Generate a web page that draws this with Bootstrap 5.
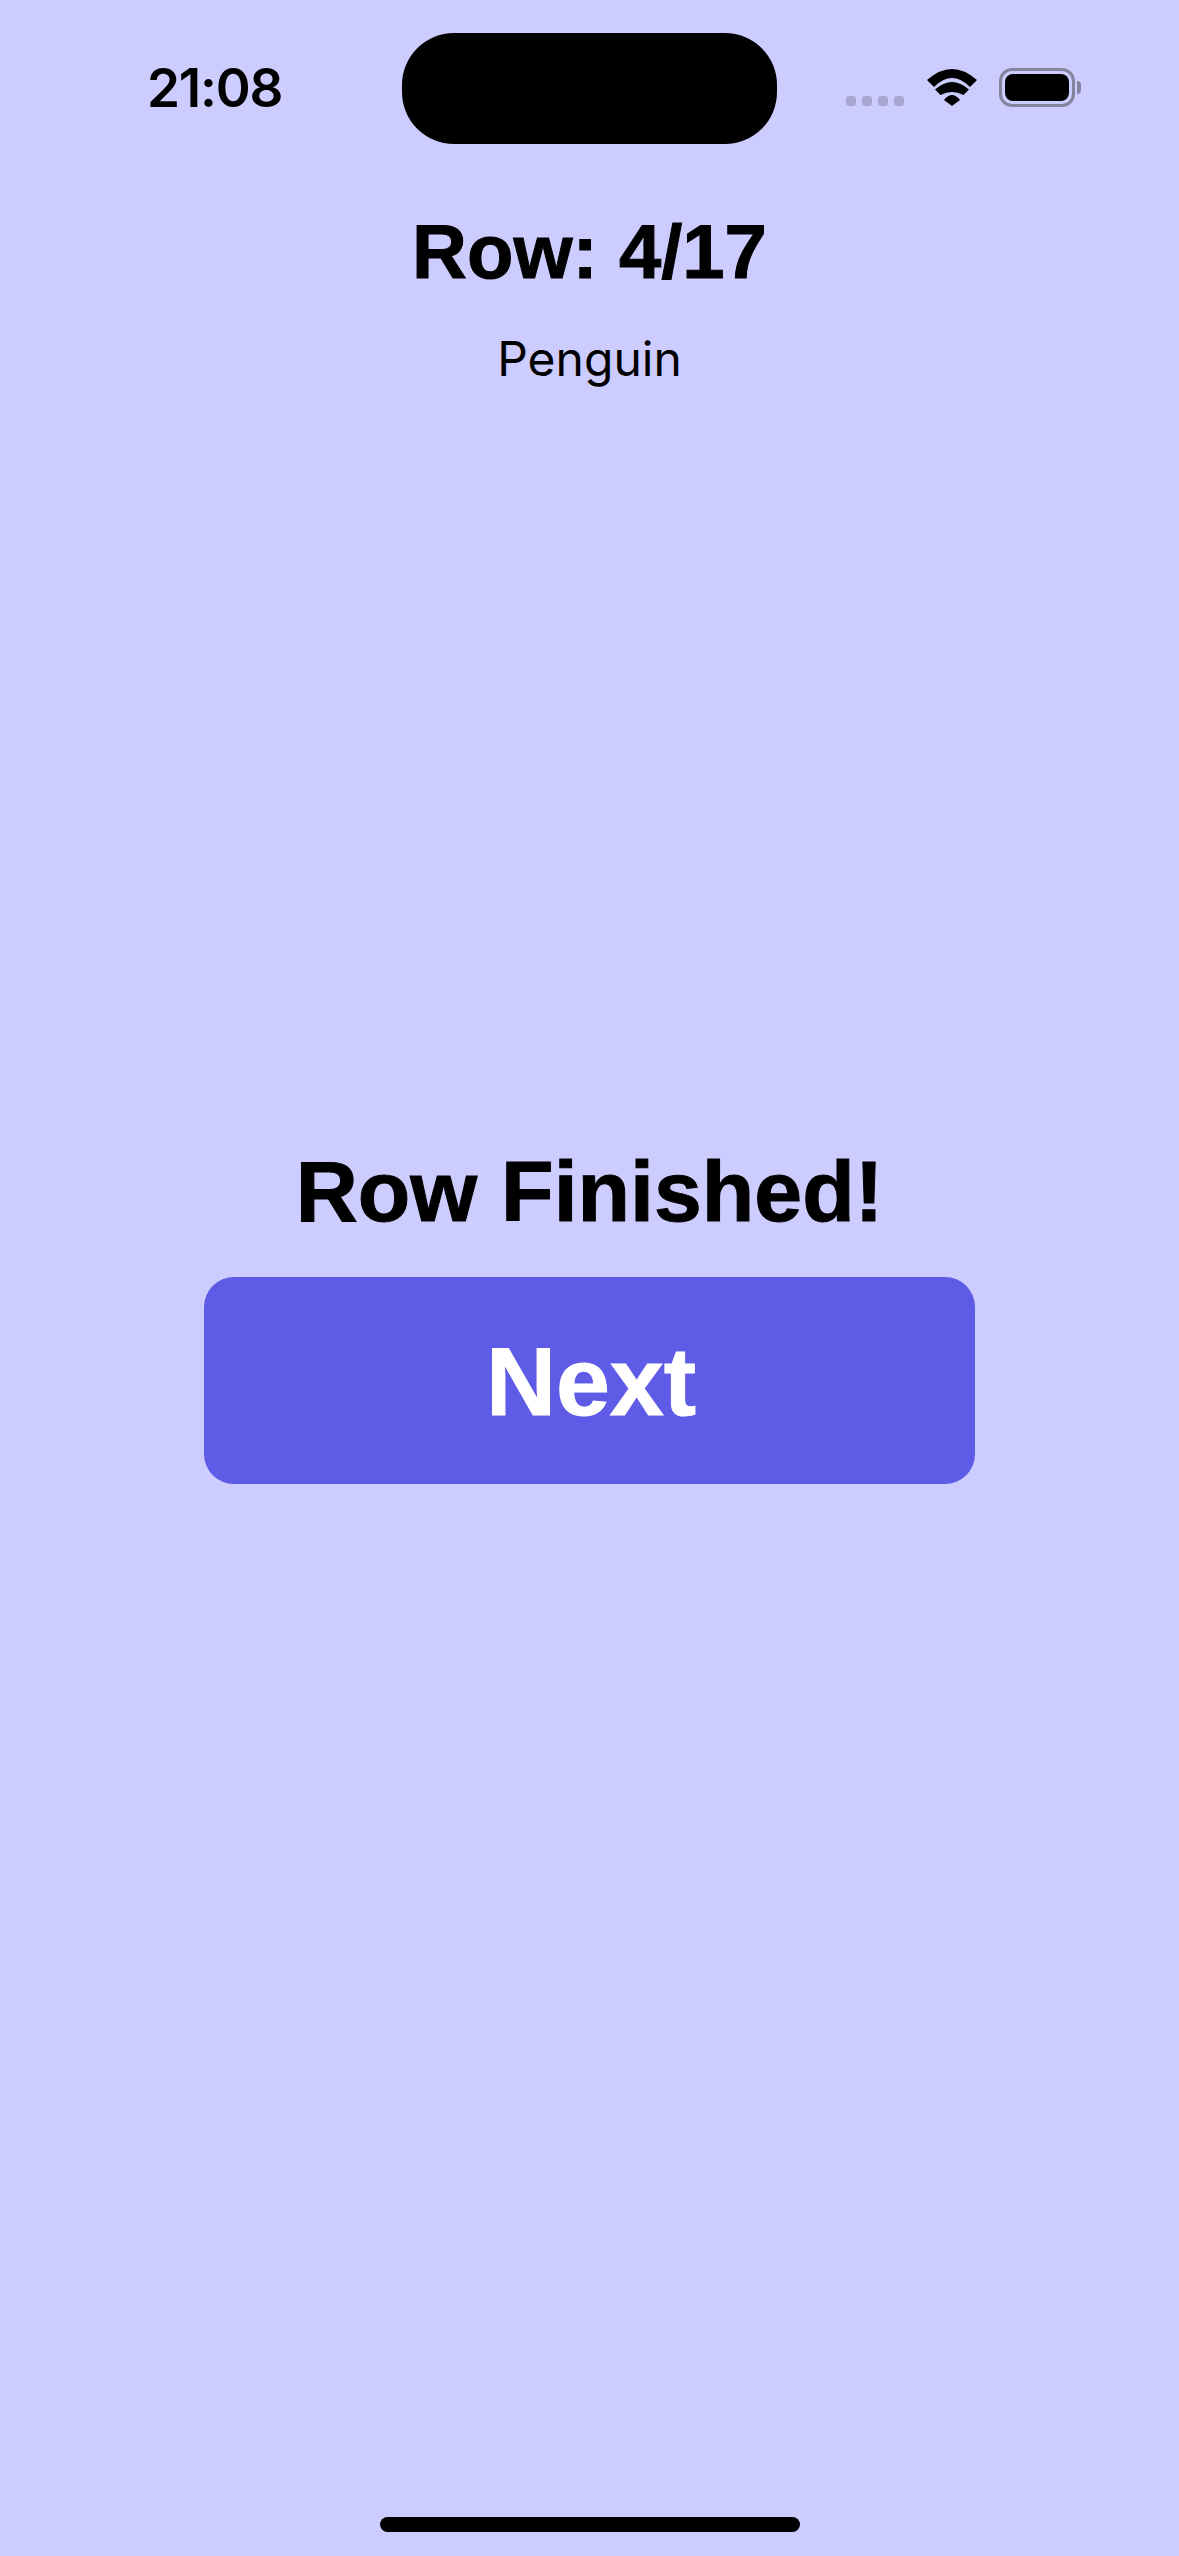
<!DOCTYPE html>
<html lang="en">
<head>
<meta charset="utf-8">
<title>Row</title>
<link rel="stylesheet" href="https://cdn.jsdelivr.net/npm/bootstrap@5.3.0/dist/css/bootstrap.min.css">
<style>
html, body { height: 100%; }
body { background: #ccccff; color: #000; font-family: "Liberation Sans", Arial, sans-serif; }
.phone-page { height: 2556px; width: 1179px; }
.status-strip { height: 144px; padding-top: 33px; }
.status-left { width: 402px; height: 111px; padding: 24px 0 0 147px; }
.status-time { font-family: Inter, sans-serif; font-weight: 600; font-size: 53px; line-height: 62px; letter-spacing: -1.2px; }
.island { width: 375px; height: 111px; background: #000; border-radius: 52px; }
.status-right { width: 402px; height: 111px; padding: 36px 0 0 69px; }
.signal-dots { gap: 6px; margin-top: 27px; margin-right: 23px; }
.signal-dot { width: 10px; height: 10px; border-radius: 3px; background: #a9a6d1; }
.wifi-glyph { width: 50px; height: 37px; margin-right: 22px; }
.batt-wrap { margin-top: -1px; }
.batt-shell { width: 76px; height: 39px; border: 3px solid #85849f; border-radius: 13px; padding: 3px; }
.batt-fill { background: #000; border-radius: 8px; height: 100%; }
.batt-cap { width: 4px; height: 13px; background: #85849f; border-radius: 0 4px 4px 0; margin-left: 2px; }
.row-title { font-size: 76px; font-weight: 700; line-height: 86px; margin: 65px 0 0; -webkit-text-stroke: 1px #000; }
.row-sub { font-family: Inter, sans-serif; font-size: 48px; line-height: 60px; margin: 34px 0 0; }
.finish-block { margin-top: 753px; }
.finish-title { font-size: 86px; font-weight: 700; line-height: 98px; margin: 0 0 37px; -webkit-text-stroke: 1px #000; }
.next-btn { width: 771px; height: 207px; background: #5e5ce6; border: 0; border-radius: 30px; color: #fff; font-size: 97px; font-weight: 700; line-height: 1; padding: 2px 0 0 3px; -webkit-text-stroke: 1px #fff; }
.next-btn:hover, .next-btn:active { background: #5e5ce6; color: #fff; }
.home-bar { width: 420px; height: 15px; background: #000; border-radius: 8px; margin-bottom: 24px; }
</style>
</head>
<body>
<div class="phone-page d-flex flex-column align-items-center">
  <header class="status-strip d-flex w-100">
    <div class="status-left"><span class="status-time">21:08</span></div>
    <div class="island"></div>
    <div class="status-right d-flex align-items-start">
      <div class="signal-dots d-flex">
        <span class="signal-dot"></span><span class="signal-dot"></span><span class="signal-dot"></span><span class="signal-dot"></span>
      </div>
      <svg class="wifi-glyph" viewBox="0 0 50 37" aria-hidden="true">
        <path d="M0 11 Q25 -11 50 11 L43 18 Q25 0 7 18 Z" fill="#000"/>
        <path d="M8 20.500 Q25 5.500 42 20.500 L36.500 26 Q25 20 13.500 26 Z" fill="#000"/>
        <path d="M17 31 Q25 21 33 31 L25 37 Z" fill="#000"/>
      </svg>
      <div class="batt-wrap d-flex align-items-center">
        <div class="batt-shell"><div class="batt-fill"></div></div>
        <div class="batt-cap"></div>
      </div>
    </div>
  </header>
  <h1 class="row-title text-center">Row: 4/17</h1>
  <p class="row-sub text-center">Penguin</p>
  <section class="finish-block d-flex flex-column align-items-center">
    <h2 class="finish-title text-center">Row Finished!</h2>
    <button type="button" class="btn next-btn">Next</button>
  </section>
  <div class="home-bar mt-auto"></div>
</div>
<script src="https://cdn.jsdelivr.net/npm/bootstrap@5.3.0/dist/js/bootstrap.bundle.min.js"></script>
</body>
</html>
